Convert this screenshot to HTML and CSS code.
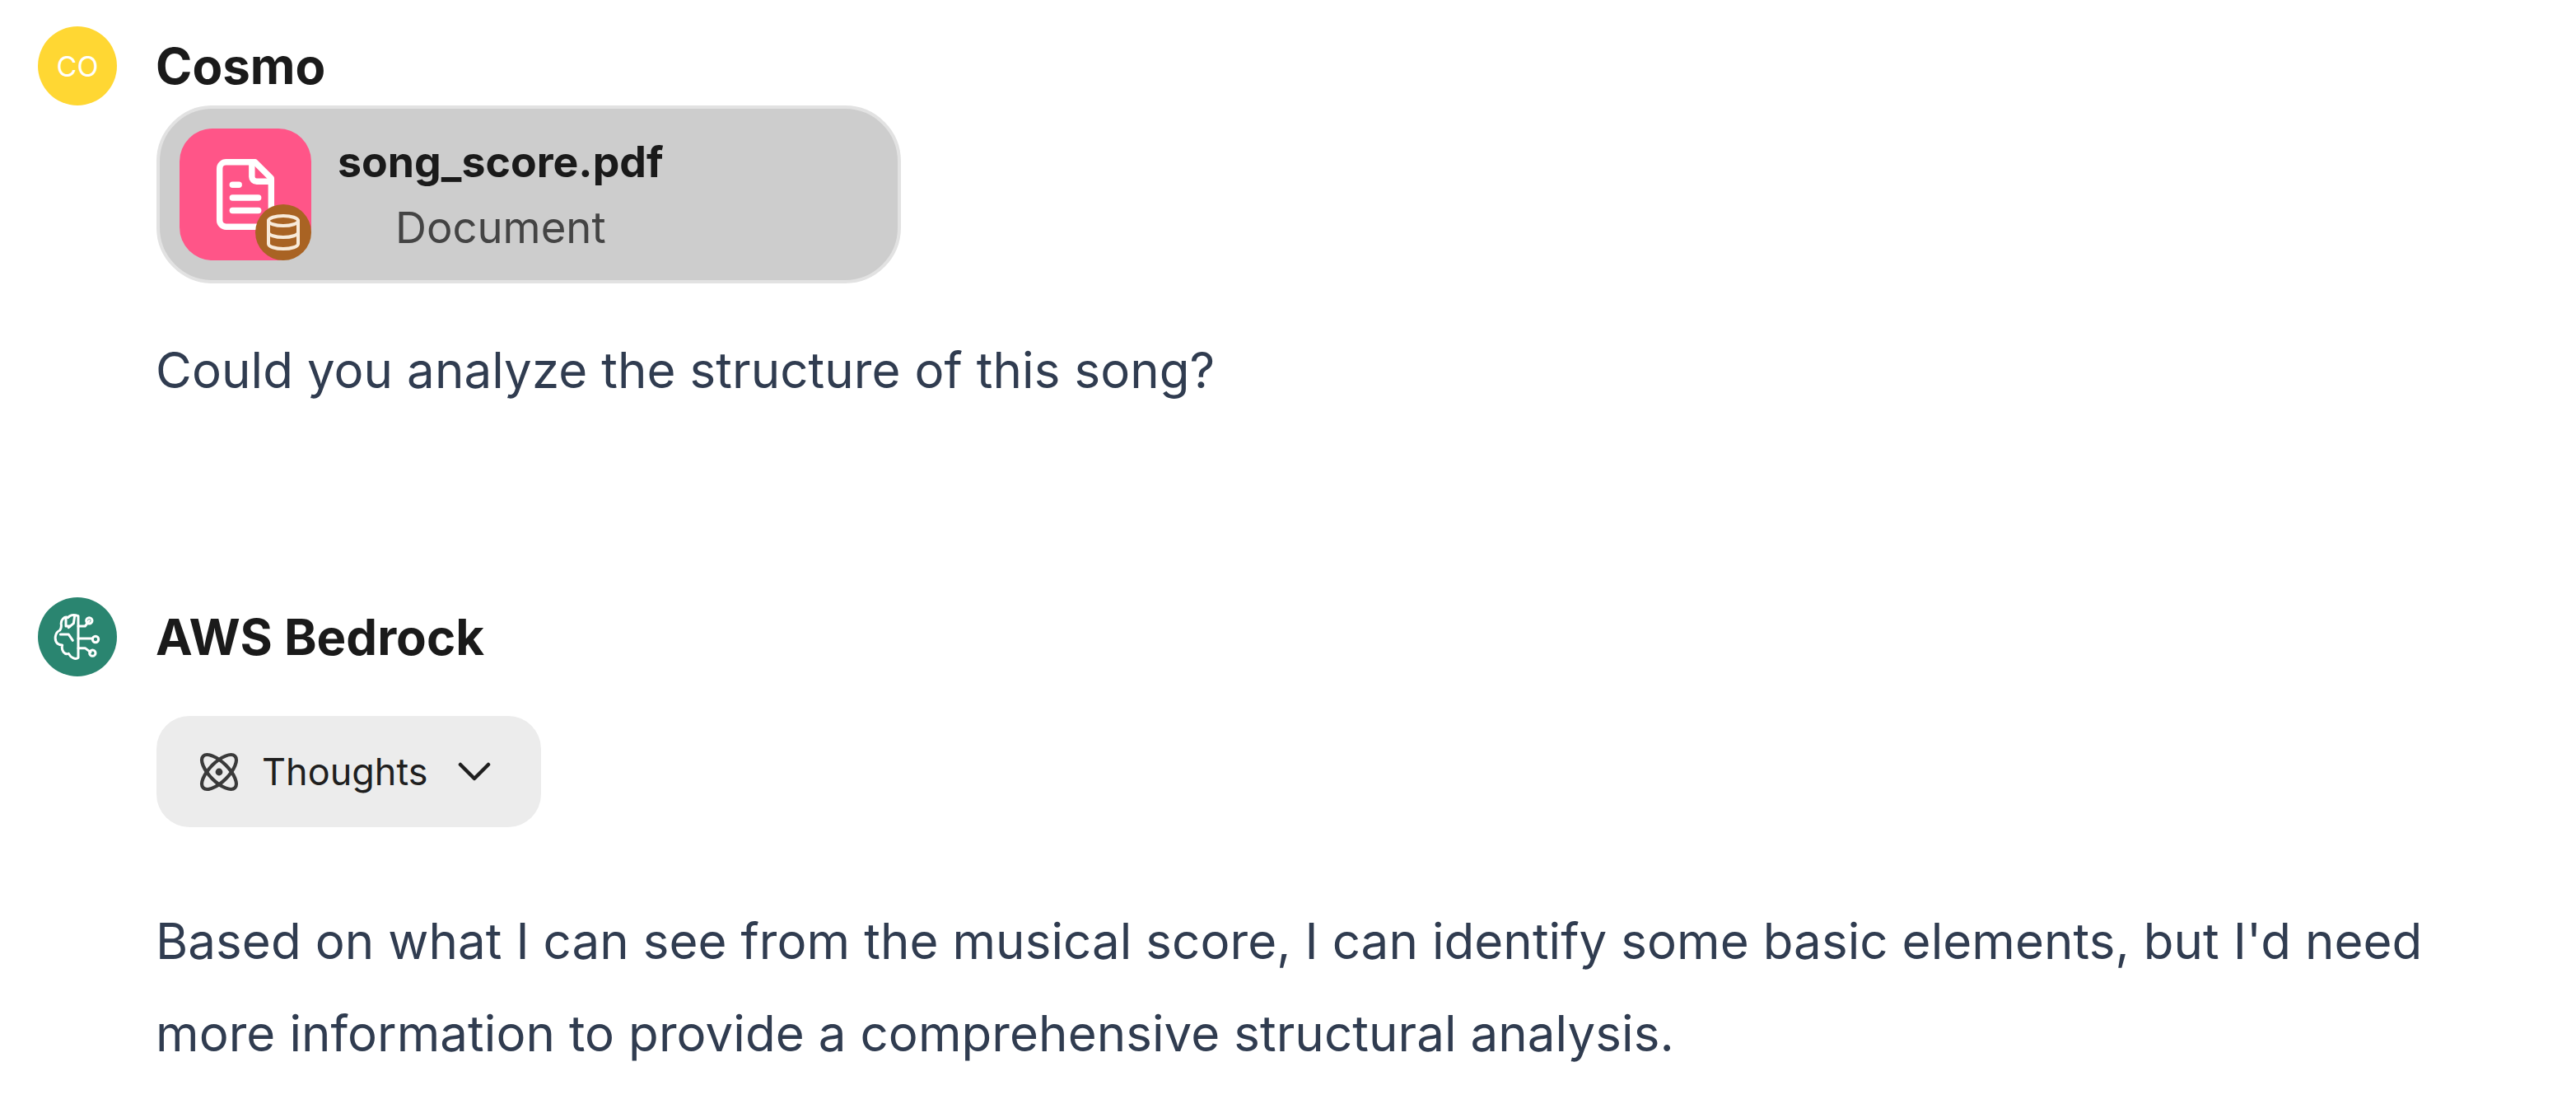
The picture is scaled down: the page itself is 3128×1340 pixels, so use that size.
FILE: index.html
```html
<!DOCTYPE html>
<html lang="en">
<head>
<meta charset="utf-8">
<title>Chat</title>
<link rel="stylesheet" href="styles.css">
</head>
<body>
<main class="chat">
  <section class="message message-user">
    <div class="avatar avatar-user">CO</div>
    <div class="content">
      <div class="name">Cosmo</div>
      <div class="file">
        <div class="file-icon">
          <svg class="doc" viewBox="0 0 24 24" fill="none" stroke="#fff" stroke-width="1.9" stroke-linecap="round" stroke-linejoin="round"><path d="M15 2H6a2 2 0 0 0-2 2v16a2 2 0 0 0 2 2h12a2 2 0 0 0 2-2V7Z"/><path d="M14 2v4.5a1.5 1.5 0 0 0 1.5 1.5H20"/><path d="M10 9H8"/><path d="M16 13H8"/><path d="M16 17H8"/></svg>
          <span class="badge"><svg viewBox="0 0 24 24" fill="none" stroke="#f8ead9" stroke-width="2" stroke-linecap="round" stroke-linejoin="round"><ellipse cx="12" cy="5" rx="9" ry="3"/><path d="M3 5V19A9 3 0 0 0 21 19V5"/><path d="M3 12A9 3 0 0 0 21 12"/></svg></span>
        </div>
        <div class="file-text">
          <div class="file-name">song_score.pdf</div>
          <div class="file-type">Document</div>
        </div>
      </div>
      <p class="text text-question">Could you analyze the structure of this song?</p>
    </div>
  </section>
  <section class="message message-bot">
    <div class="avatar avatar-bot">
      <svg viewBox="48 40 288 288" fill="none" stroke="#fff" stroke-width="9" stroke-linecap="round" stroke-linejoin="round"><path d="M195 108C180 103 165 105 158 114C145 108 130 122 133 140C134 150 131 156 128 160C110 168 106 195 120 209C127 214 132 214 137 214C132 234 145 250 160 245C168 260 185 268 195 260Z"/><path d="M150 118V145H165"/><path d="M182 108L178 135L160 150"/><path d="M130 175H160L175 197"/><path d="M195 145H220L235 125"/><path d="M195 190H247"/><path d="M195 225H220L240 240"/><circle cx="235" cy="125" r="11"/><circle cx="258" cy="193" r="11"/><circle cx="247" cy="243" r="11"/></svg>
    </div>
    <div class="content">
      <div class="name">AWS Bedrock</div>
      <div class="thoughts">
        <svg class="atom" viewBox="0 0 24 24" fill="none" stroke="#3a3a3a" stroke-width="2.1"><ellipse cx="12" cy="12" rx="13.6" ry="5.8" transform="rotate(45 12 12)"/><ellipse cx="12" cy="12" rx="13.6" ry="5.8" transform="rotate(-45 12 12)"/><circle cx="12" cy="12" r="2.2" fill="#3a3a3a" stroke="none"/></svg>
        <span class="thoughts-label">Thoughts</span>
        <svg class="chev" viewBox="0 0 40 24" fill="none" stroke="#1f1f1f" stroke-width="4.5" stroke-linecap="round" stroke-linejoin="round"><path d="M3 3L20 20L37 3"/></svg>
      </div>
      <p class="text text-answer">Based on what I can see from the musical score, I can identify some basic elements, but I'd need more information to provide a comprehensive structural analysis.</p>
    </div>
  </section>
</main>
</body>
</html>
```
FILE: styles.css
```css
html, body {
  margin: 0;
  padding: 0;
  background: #fff;
  height: 100%;
  overflow: hidden;
}
body {
  font-family: Inter, "Noto Sans", sans-serif;
  color: #1a1a1a;
}
.chat {
  padding: 32px 46px 0;
  display: flex;
  flex-direction: column;
  gap: 220px;
}
.message {
  display: grid;
  grid-template-columns: 96px 1fr;
  column-gap: 47px;
  align-items: start;
}
.avatar {
  width: 96px;
  height: 96px;
  border-radius: 50%;
  display: flex;
  align-items: center;
  justify-content: center;
}
.avatar svg {
  width: 96px;
  height: 96px;
  display: block;
}
.avatar-user {
  background: #ffd733;
  color: #fff;
  font-size: 34px;
}
.avatar-bot {
  background: #2a8570;
}
.name {
  font-size: 60px;
  line-height: 48px;
  font-weight: 700;
  padding-top: 24px;
  color: #1a1a1a;
}
.file {
  display: inline-flex;
  align-items: center;
  gap: 32px;
  box-sizing: border-box;
  width: 904px;
  height: 216px;
  margin-top: 24px;
  margin-left: 1px;
  padding: 0 24px;
  background: #cdcdcd;
  border: 4px solid #e2e2e2;
  border-radius: 68px;
}
.file-icon {
  position: relative;
  width: 160px;
  height: 160px;
  border-radius: 40px;
  background: #ff5588;
  display: flex;
  align-items: center;
  justify-content: center;
  flex: none;
}
.doc {
  width: 94px;
  height: 94px;
}
.badge {
  position: absolute;
  right: 0;
  bottom: 0;
  width: 68px;
  height: 68px;
  border-radius: 50%;
  background: #a96323;
  display: flex;
  align-items: center;
  justify-content: center;
}
.badge svg {
  width: 48px;
  height: 48px;
}
.file-text {
  text-align: center;
}
.file-name {
  font-size: 51.8px;
  line-height: 40px;
  font-weight: 700;
  color: #1a1a1a;
}
.file-type {
  font-size: 52.6px;
  line-height: 40px;
  margin-top: 40px;
  color: #444;
}
.text {
  margin: 0;
  font-size: 60px;
  line-height: 112px;
  letter-spacing: 0.08px;
  color: #303c50;
}
.text-question {
  margin-top: 49px;
}
.text-answer {
  margin-top: 82px;
  max-width: 2800px;
}
.thoughts {
  display: inline-flex;
  align-items: center;
  box-sizing: border-box;
  width: 467px;
  height: 135px;
  margin-top: 72px;
  margin-left: 1px;
  padding-left: 52px;
  background: #ececec;
  border-radius: 40px;
}
.atom {
  width: 48px;
  height: 48px;
  flex: none;
  overflow: visible;
}
.thoughts-label {
  margin-left: 28px;
  font-size: 45px;
  color: #1f1f1f;
}
.chev {
  width: 40px;
  height: 24px;
  margin-left: 36px;
  flex: none;
}
```
